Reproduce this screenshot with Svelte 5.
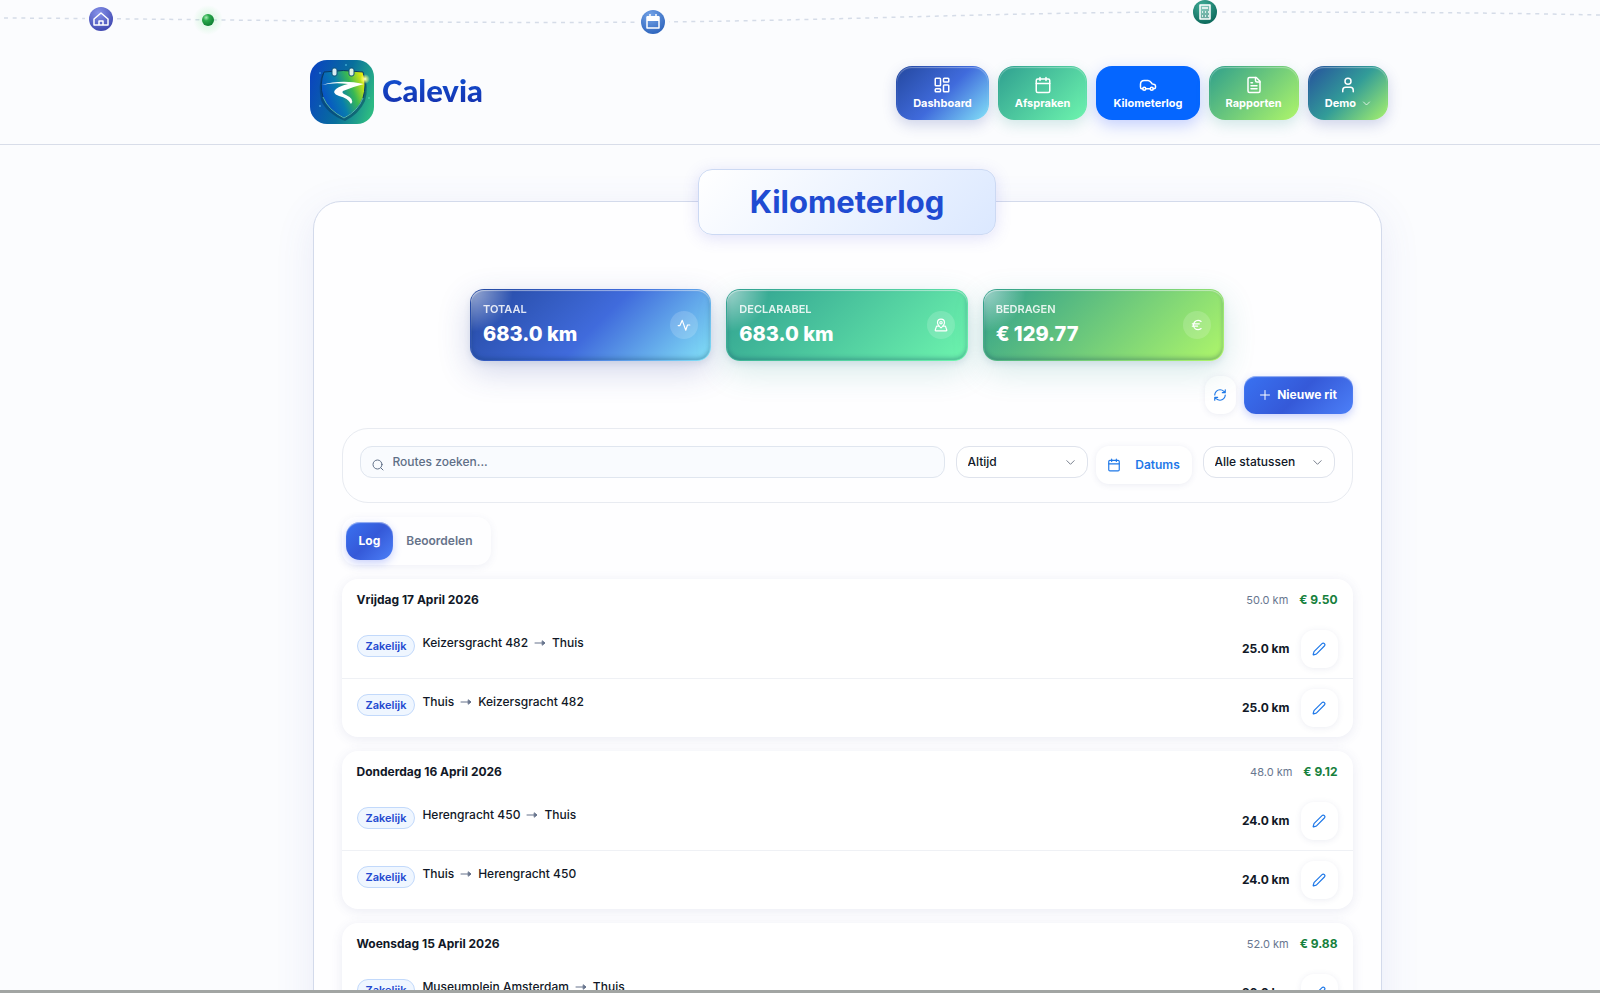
<script lang="ts">
  interface Trip {
    from: string;
    to: string;
    km: string;
  }

  interface Day {
    label: string;
    km: string;
    amount: string;
    trips: Trip[];
  }

  const navItems = [
    { label: 'Dashboard', icon: 'dashboard', tone: 'blue' },
    { label: 'Afspraken', icon: 'calendar', tone: 'green' },
    { label: 'Kilometerlog', icon: 'car', tone: 'active' },
    { label: 'Rapporten', icon: 'file', tone: 'lime' },
    { label: 'Demo', icon: 'user', tone: 'mixed' }
  ];

  const stats = [
    { label: 'Totaal', value: '683.0 km', icon: 'activity', tone: 'blue' },
    { label: 'Declarabel', value: '683.0 km', icon: 'pin', tone: 'green' },
    { label: 'Bedragen', value: '€ 129.77', icon: 'euro', tone: 'lime' }
  ];

  const days: Day[] = [
    {
      label: 'Vrijdag 17 April 2026',
      km: '50.0 km',
      amount: '€ 9.50',
      trips: [
        { from: 'Keizersgracht 482', to: 'Thuis', km: '25.0 km' },
        { from: 'Thuis', to: 'Keizersgracht 482', km: '25.0 km' }
      ]
    },
    {
      label: 'Donderdag 16 April 2026',
      km: '48.0 km',
      amount: '€ 9.12',
      trips: [
        { from: 'Herengracht 450', to: 'Thuis', km: '24.0 km' },
        { from: 'Thuis', to: 'Herengracht 450', km: '24.0 km' }
      ]
    },
    {
      label: 'Woensdag 15 April 2026',
      km: '52.0 km',
      amount: '€ 9.88',
      trips: [{ from: 'Museumplein Amsterdam', to: 'Thuis', km: '26.0 km' }]
    }
  ];

  let search = $state('');
  let period = $state('Altijd');
  let status = $state('Alle statussen');
  let tab = $state('Log');
</script>

{#snippet icon(name: string)}
  <svg class="icon" viewBox="0 0 24 24" aria-hidden="true">
    {#if name === 'dashboard'}
      <rect x="3" y="3" width="7" height="10" rx="1" />
      <rect x="14" y="3" width="7" height="5" rx="1" />
      <rect x="14" y="12" width="7" height="9" rx="1" />
      <rect x="3" y="17" width="7" height="4" rx="1" />
    {:else if name === 'calendar'}
      <rect x="3" y="4" width="18" height="18" rx="2" />
      <path d="M8 2v4M16 2v4M3 10h18" />
    {:else if name === 'car'}
      <path d="M5 17H3.500C2.500 17 2 16 2 14.500V11c0-3 2-5 5-5h5c2 0 3 1 4.500 3l1 1.500 3 .8c1 .3 1.500 1 1.500 2V15c0 1-.6 2-2 2h-1M9 17h6" />
      <circle cx="7" cy="17" r="2" />
      <circle cx="17" cy="17" r="2" />
    {:else if name === 'file'}
      <path d="M15 2H6a2 2 0 0 0-2 2v16a2 2 0 0 0 2 2h12a2 2 0 0 0 2-2V7z" />
      <path d="M14 2v4a2 2 0 0 0 2 2h4M8 9h2M8 13h8M8 17h8" />
    {:else if name === 'user'}
      <circle cx="12" cy="7" r="4" />
      <path d="M19 21v-2a4 4 0 0 0-4-4H9a4 4 0 0 0-4 4v2" />
    {:else if name === 'activity'}
      <path d="M2 13h3l4-9 6 17 3-9h4" />
    {:else if name === 'pin'}
      <path d="M18 8c0 3.600-6 9-6 9s-6-5.400-6-9a6 6 0 0 1 12 0" />
      <circle cx="12" cy="8" r="2" />
      <path d="M8.800 14H5a1 1 0 0 0-.9.7l-2 6c-.1.700.3 1.300.9 1.300h18c.7 0 1.200-.6.900-1.300l-2-6A1 1 0 0 0 19 14h-3.800" />
    {:else if name === 'euro'}
      <path d="M4 10h12M4 14h9M19 6a7.700 7.700 0 0 0-5.200-2A7.900 7.900 0 0 0 6 12c0 4.400 3.500 8 7.800 8 2 0 3.800-.8 5.200-2" />
    {:else if name === 'refresh'}
      <path d="M3 12a9 9 0 0 1 9-9 9.800 9.800 0 0 1 6.700 2.700L21 8M21 3v5h-5M21 12a9 9 0 0 1-9 9 9.800 9.800 0 0 1-6.700-2.700L3 16M8 16H3v5" />
    {:else if name === 'plus'}
      <path d="M3 12h18M12 3v18" />
    {:else if name === 'search'}
      <circle cx="11" cy="11" r="9" />
      <path d="m22 22-4.500-4.500" />
    {:else if name === 'chevron'}
      <path d="m4 8 8 8 8-8" />
    {:else if name === 'arrow'}
      <path d="M2 12h18" />
      <path d="m17 8 5 4-5 4z" fill="currentColor" />
    {:else if name === 'pencil'}
      <path d="M21.200 6.800a1 1 0 0 0-4-4L3.800 16.200a2 2 0 0 0-.5.800L2 21.400a.5.5 0 0 0 .6.600L7 20.700a2 2 0 0 0 .8-.5z" />
    {/if}
  </svg>
{/snippet}

<div class="page">
  <svg class="trail" viewBox="0 0 1600 40" aria-hidden="true">
    <defs>
      <radialGradient id="home" cx=".4" cy=".25" r=".8">
        <stop offset="0" stop-color="#8793ea" />
        <stop offset="1" stop-color="#3d45ae" />
      </radialGradient>
      <radialGradient id="agenda" cx=".4" cy=".25" r=".8">
        <stop offset="0" stop-color="#76a5e8" />
        <stop offset="1" stop-color="#2b62bb" />
      </radialGradient>
      <radialGradient id="calc" cx=".4" cy=".25" r=".8">
        <stop offset="0" stop-color="#42ae99" />
        <stop offset="1" stop-color="#096558" />
      </radialGradient>
      <radialGradient id="dot" cx=".35" cy=".3" r=".75">
        <stop offset="0" stop-color="#a9efb6" />
        <stop offset=".35" stop-color="#2aaa4c" />
        <stop offset="1" stop-color="#0d7b31" />
      </radialGradient>
      <radialGradient id="glow">
        <stop offset="0" stop-color="#6ee787" stop-opacity=".3" />
        <stop offset="1" stop-color="#6ee787" stop-opacity="0" />
      </radialGradient>
    </defs>
    <path class="trail-line" d="M4 18C220 19 440 24 653 22S1000 12 1205 12s300 1 395 3" />
    <circle class="gap" cx="101" cy="19" r="16" />
    <circle cx="101" cy="19" r="12" fill="url(#home)" />
    <path class="mark" d="m94 19 7-6 7 6v6H94zM99 25v-4h4v4" />
    <circle cx="208" cy="20" r="15" fill="url(#glow)" />
    <circle cx="208" cy="20" r="6" fill="url(#dot)" />
    <circle class="gap" cx="653" cy="22" r="16" />
    <circle cx="653" cy="22" r="12" fill="url(#agenda)" />
    <rect x="647" y="16" width="12" height="5" fill="#fff" />
    <path class="mark" d="M647 17h12v11h-12zM650 14v3M656 14v3" />
    <circle class="gap" cx="1205" cy="12" r="16" />
    <circle cx="1205" cy="12" r="12" fill="url(#calc)" />
    <rect x="1200" y="5" width="10" height="14" fill="#fff" opacity=".35" />
    <path class="mark" d="M1200 5h10v14h-10zM1202 8h6M1202 12h1M1205 12h1M1208 12h1M1202 16h1M1205 16h1M1208 16h1" />
  </svg>

  <header>
    <div class="header-inner">
      <a class="brand" href="#home">
        <svg class="logo" viewBox="0 0 64 64" aria-hidden="true">
          <defs>
            <linearGradient id="tile" x1="0" y1=".3" x2="1" y2=".6">
              <stop offset="0" stop-color="#0a46be" />
              <stop offset=".55" stop-color="#086f9c" />
              <stop offset="1" stop-color="#2cb983" />
            </linearGradient>
            <linearGradient id="shield" x1="0" y1=".65" x2="1" y2=".25">
              <stop offset="0" stop-color="#0749ca" />
              <stop offset=".42" stop-color="#087dad" />
              <stop offset=".7" stop-color="#38b854" />
              <stop offset="1" stop-color="#e6ed09" />
            </linearGradient>
            <radialGradient id="spark">
              <stop offset="0" stop-color="#fff" />
              <stop offset=".3" stop-color="#fcff8a" stop-opacity=".8" />
              <stop offset="1" stop-color="#fcff8a" stop-opacity="0" />
            </radialGradient>
          </defs>
          <rect width="64" height="64" rx="17" fill="url(#tile)" />
          <path fill="#053a5e" opacity=".5" d="M12 14Q33 8 54 14Q59 27 55 41Q49 54 35 61Q16 53 11 40Q8 26 12 14z" />
          <path fill="url(#shield)" stroke="#073965" stroke-width="1" d="M14 12Q33 9 53 12Q57 25 53 38Q48 51 34 58Q18 50 13 37Q9 24 14 12z" />
          <path fill="none" stroke="#67d8c5" stroke-width="1" opacity=".8" d="M13 37Q18 50 34 58Q48 51 53 38" />
          <path fill="#fff" d="M12 25Q31 19 54 24Q42 27 33 31Q31 33 36 35Q45 39 41 44Q38 38 29 36Q21 33 26 29Q30 26 38 24Q24 22 12 25z" />
          <rect x="22" y="8" width="5" height="8" rx="2" fill="#d8edf4" stroke="#0a5279" />
          <rect x="39" y="8" width="5" height="8" rx="2" fill="#dff1e5" stroke="#0a5279" />
          <circle cx="55" cy="19" r="5" fill="url(#spark)" />
          <circle cx="36" cy="5" r=".8" fill="#63d1ef" />
          <circle cx="10" cy="13" r=".8" fill="#56baf1" />
          <circle cx="10" cy="46" r=".8" fill="#75cfff" />
          <circle cx="59" cy="38" r=".8" fill="#65e4bd" />
        </svg>
        <span class="brand-name">Calevia</span>
      </a>
      <nav>
        {#each navItems as item}
          <a class="nav-item {item.tone}" href="#{item.label.toLowerCase()}">
            {@render icon(item.icon)}
            <span class="nav-label">
              {item.label}
              {#if item.icon === 'user'}{@render icon('chevron')}{/if}
            </span>
          </a>
        {/each}
      </nav>
    </div>
  </header>

  <div class="content">
    <main>
      <div class="title-badge"><h1>Kilometerlog</h1></div>

      <div class="stats">
        {#each stats as stat}
          <div class="stat {stat.tone}">
            <div>
              <div class="stat-label">{stat.label}</div>
              <div class="stat-value">{stat.value}</div>
            </div>
            <span class="stat-icon">{@render icon(stat.icon)}</span>
          </div>
        {/each}
      </div>

      <div class="actions">
        <button class="soft refresh" aria-label="Vernieuwen">{@render icon('refresh')}</button>
        <button class="primary">{@render icon('plus')}Nieuwe rit</button>
      </div>

      <div class="filters">
        <label class="search">
          {@render icon('search')}
          <input type="text" placeholder="Routes zoeken..." aria-label="Routes zoeken" bind:value={search} />
        </label>
        <div class="period">
          <label class="select">
            <select aria-label="Periode" bind:value={period}>
              <option>Altijd</option>
              <option>Deze maand</option>
            </select>
            {@render icon('chevron')}
          </label>
          <button class="soft dates">{@render icon('calendar')}Datums</button>
        </div>
        <label class="select">
          <select aria-label="Status" bind:value={status}>
            <option>Alle statussen</option>
            <option>Zakelijk</option>
          </select>
          {@render icon('chevron')}
        </label>
      </div>

      <div class="tabs">
        {#each ['Log', 'Beoordelen'] as name}
          <button class="tab" class:selected={tab === name} onclick={() => (tab = name)}>{name}</button>
        {/each}
      </div>

      <div class="days">
        {#each days as day}
          <section class="day">
            <div class="day-head">
              <h2>{day.label}</h2>
              <span class="day-km">{day.km}</span>
              <span class="day-amount">{day.amount}</span>
            </div>
            {#each day.trips as trip}
              <div class="trip">
                <span class="tag">Zakelijk</span>
                <div class="route">
                  <span>{trip.from}</span>
                  {@render icon('arrow')}
                  <span>{trip.to}</span>
                </div>
                <span class="trip-km">{trip.km}</span>
                <button class="soft edit" aria-label="Rit bewerken">{@render icon('pencil')}</button>
              </div>
            {/each}
          </section>
        {/each}
      </div>
    </main>
  </div>

  <div class="bottom-edge"></div>
</div>

<style>
  :global(body) {
    background: #fbfcfe;
  }

  .page {
    position: relative;
    height: 100vh;
    overflow: hidden;
    font-family: Inter, 'Liberation Sans', sans-serif;
    font-size: 12px;
    line-height: 18px;
    color: #111827;
  }

  .page *,
  .page *::before {
    box-sizing: border-box;
  }

  button,
  input,
  select {
    font: inherit;
    color: inherit;
    margin: 0;
  }

  button {
    cursor: pointer;
  }

  a {
    color: inherit;
    text-decoration: none;
  }

  .icon {
    width: 14px;
    height: 14px;
    flex: none;
    fill: none;
    stroke: currentColor;
    stroke-width: 2;
    stroke-linecap: round;
    stroke-linejoin: round;
  }

  .trail {
    position: absolute;
    top: 0;
    left: 0;
    width: 100%;
  }

  .trail-line {
    fill: none;
    stroke: #d5dce8;
    stroke-width: 1.5;
    stroke-dasharray: 4 4.7;
  }

  .gap {
    fill: #fbfcfe;
  }

  .mark {
    fill: none;
    stroke: #fff;
    stroke-width: 1.5;
    stroke-linejoin: round;
  }

  header {
    padding: 60px 0 20px 98px;
    border-bottom: 1px solid #d8dde9;
  }

  .header-inner {
    display: flex;
    align-items: center;
    justify-content: space-between;
    max-width: 1078px;
    margin: 0 auto;
  }

  .brand {
    display: flex;
    align-items: center;
    gap: 8px;
  }

  .logo {
    width: 64px;
    height: 64px;
  }

  .brand-name {
    padding-bottom: 4px;
    font-family: Lato, sans-serif;
    font-size: 31px;
    line-height: 40px;
    font-weight: 900;
    background: linear-gradient(180deg, #1259d8, #1526a4);
    background-clip: text;
    color: transparent;
  }

  nav {
    display: flex;
    gap: 9px;
    padding-top: 2px;
  }

  .nav-item {
    display: flex;
    flex-direction: column;
    align-items: center;
    gap: 2px;
    padding: 9px 16px;
    border: 1px solid transparent;
    border-radius: 16px;
    color: #fff;
    font-size: 11px;
    line-height: 14px;
    font-weight: 700;
  }

  .nav-item > .icon {
    width: 18px;
    height: 18px;
  }

  .nav-label {
    display: flex;
    align-items: center;
    gap: 6px;
  }

  .nav-label .icon {
    width: 9px;
    height: 9px;
  }

  .blue,
  .green,
  .lime,
  .mixed {
    --glow: rgba(45, 150, 140, 0.2);
    background-origin: border-box;
    box-shadow:
      inset 0 1px 1px rgba(255, 255, 255, 0.35),
      0 5px 14px var(--glow);
  }

  .blue {
    --glow: rgba(50, 70, 160, 0.22);
    background-image: linear-gradient(135deg, #24489f 0%, #406bdc 52%, #84e3f8 100%);
  }

  .green {
    background-image: linear-gradient(135deg, #2f9f90 0%, #6ef5ae 100%);
  }

  .lime {
    background-image: linear-gradient(135deg, #2f9f8c 0%, #aff66a 100%);
  }

  .mixed {
    --glow: rgba(50, 70, 160, 0.22);
    background-image: linear-gradient(135deg, #26509d 0%, #329c98 50%, #a9f36b 100%);
  }

  .active {
    background-color: #0566ff;
    box-shadow: 0 5px 16px rgba(50, 90, 255, 0.28);
  }

  .content {
    padding: 56px 0 0 94px;
  }

  main {
    max-width: 1069px;
    margin: 0 auto;
    padding: 0 28px 28px;
    border: 1px solid #d3daeb;
    border-radius: 28px;
    background: #fefeff;
    box-shadow: 0 10px 40px rgba(80, 90, 200, 0.1);
  }

  .title-badge {
    width: 298px;
    margin: -33px auto 0;
    padding: 12px 0;
    border: 1px solid #ccd9f3;
    border-radius: 14px;
    background: linear-gradient(135deg, #fff, #dbe8ff);
    box-shadow: 0 3px 16px rgba(90, 90, 220, 0.18);
    text-align: center;
  }

  h1 {
    margin: 0;
    font-size: 31px;
    line-height: 40px;
    font-weight: 700;
    color: #1f4bd2;
  }

  .stats {
    display: grid;
    grid-template-columns: repeat(3, 1fr);
    gap: 15px;
    max-width: 754px;
    margin: 54px auto 0;
  }

  .stat {
    position: relative;
    display: flex;
    align-items: center;
    justify-content: space-between;
    height: 72px;
    padding: 0 12px;
    border: 1px solid transparent;
    border-radius: 14px;
    color: #fff;
    box-shadow:
      inset 0 1px 1px rgba(255, 255, 255, 0.5),
      inset 0 -2px 4px rgba(10, 50, 90, 0.3),
      0 3px 6px rgba(40, 80, 130, 0.1),
      0 10px 32px var(--glow);
  }

  .stat::before {
    content: '';
    position: absolute;
    inset: 0;
    border-radius: 12px;
    background: radial-gradient(circle at 0 0, rgba(255, 255, 255, 0.55), transparent 42px);
  }

  .stat > * {
    position: relative;
  }

  .stat-label {
    font-size: 11px;
    line-height: 14px;
    font-weight: 600;
    text-transform: uppercase;
    opacity: 0.85;
  }

  .stat-value {
    margin-top: 4px;
    font-size: 20px;
    line-height: 28px;
    font-weight: 800;
  }

  .stat-icon {
    display: grid;
    place-items: center;
    width: 28px;
    height: 28px;
    border-radius: 50%;
    background: rgba(255, 255, 255, 0.16);
  }

  .actions {
    display: flex;
    justify-content: flex-end;
    gap: 8px;
    margin-top: 15px;
  }

  .soft {
    display: flex;
    align-items: center;
    justify-content: center;
    height: 38px;
    padding: 0;
    border: 0;
    border-radius: 13px;
    background: #fff;
    color: #1e78e8;
    box-shadow: 0 1px 6px rgba(70, 80, 140, 0.1);
  }

  .refresh {
    width: 31px;
  }

  .primary,
  .tab.selected {
    background: linear-gradient(135deg, #3972f2, #3559d8 50%, #4c80f8);
    box-shadow:
      inset 0 1px 1px rgba(255, 255, 255, 0.5),
      0 3px 9px rgba(60, 90, 240, 0.28);
    color: #fff;
    font-weight: 700;
  }

  .primary {
    display: flex;
    align-items: center;
    justify-content: center;
    gap: 6px;
    width: 109px;
    height: 38px;
    padding: 0;
    border: 0;
    border-radius: 12px;
  }

  .primary .icon {
    width: 12px;
    height: 12px;
  }

  .filters {
    display: flex;
    align-items: flex-start;
    gap: 11px;
    height: 75px;
    margin-top: 14px;
    padding: 17px;
    border: 1px solid #e8ebf1;
    border-radius: 26px;
  }

  .search {
    display: flex;
    align-items: center;
    flex: 1;
    height: 32px;
    gap: 9px;
    padding: 0 11px;
    border: 1px solid #e0e6ef;
    border-radius: 12px;
    background: #f9fbfe;
    color: #5f6f87;
  }

  .search .icon {
    width: 12px;
    height: 12px;
    margin-top: 5px;
  }

  .search input {
    flex: 1;
    padding: 0;
    border: 0;
    outline: 0;
    background: none;
  }

  .search input::placeholder {
    color: #5f6f87;
    opacity: 1;
  }

  .search input,
  .select select {
    font-weight: 500;
  }

  .period {
    display: flex;
    gap: 8px;
  }

  .select {
    display: grid;
    align-items: center;
    width: 132px;
    height: 32px;
  }

  .select select {
    grid-area: 1 / 1;
    width: 100%;
    height: 100%;
    padding: 0 11px;
    border: 1px solid #dfe3ec;
    border-radius: 13px;
    background: #fff;
    appearance: none;
  }

  .select .icon {
    grid-area: 1 / 1;
    justify-self: end;
    width: 11px;
    height: 11px;
    margin-right: 12px;
    color: #6c7482;
    pointer-events: none;
  }

  .dates {
    width: 96px;
    gap: 14px;
    font-weight: 600;
  }

  .tabs {
    display: inline-flex;
    margin-top: 14px;
    padding: 5px 5px 5px 4px;
    border-radius: 14px;
    box-shadow: 0 2px 8px rgba(70, 80, 140, 0.08);
  }

  .tab {
    height: 38px;
    padding: 0 13px;
    border: 0;
    border-radius: 14px;
    background: none;
    font-weight: 600;
    color: #66738a;
  }

  .days {
    display: grid;
    gap: 14px;
    margin-top: 14px;
  }

  .day {
    border-radius: 16px;
    background: #fff;
    box-shadow: 0 2px 12px rgba(70, 80, 150, 0.11);
  }

  .day-head {
    display: flex;
    align-items: center;
    height: 41px;
    padding: 0 15px;
  }

  h2 {
    margin: 0;
    flex: 1;
    font-size: 12px;
    line-height: 18px;
    font-weight: 700;
  }

  .day-km {
    font-size: 11px;
    color: #68768f;
  }

  .day-amount {
    margin-left: 11px;
    font-weight: 700;
    color: #16803c;
  }

  .trip {
    display: flex;
    align-items: center;
    height: 58px;
    padding: 0 15px;
  }

  .trip + .trip {
    height: 59px;
    border-top: 1px solid #eff1f5;
  }

  .tag {
    margin-top: -6px;
    padding: 1px 8px;
    border: 1px solid #c2d9fb;
    border-radius: 11px;
    background: #eff6ff;
    color: #2349d0;
    font-size: 11px;
    font-weight: 600;
  }

  .route {
    display: flex;
    align-items: center;
    flex: 1;
    gap: 6px;
    margin: -12px 0 0 7px;
    font-weight: 500;
  }

  .route .icon {
    width: 12px;
    height: 12px;
    color: #66738c;
  }

  .trip-km {
    font-weight: 700;
  }

  .edit {
    width: 37px;
    margin-left: 11px;
  }

  .bottom-edge {
    position: absolute;
    inset: auto 0 0;
    height: 3px;
    background: #a2a5a3;
  }
</style>
